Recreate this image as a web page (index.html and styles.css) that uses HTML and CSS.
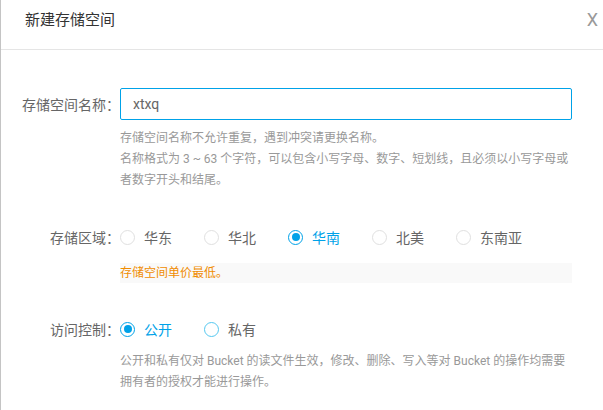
FILE: index.html
```html
<!DOCTYPE html>
<html lang="zh-CN">
<head>
    <meta charset="UTF-8">
    <meta name="viewport" content="width=device-width, initial-scale=1.0">
    <title>新建存储空间</title>
    <link rel="stylesheet" href="styles.css">
</head>
<body>
    <div class="dialog">
        <!-- Kopfzeile -->
        <div class="dialog-header">
            <span class="dialog-title">新建存储空间</span>
            <span class="dialog-close">X</span>
        </div>

        <div class="dialog-body">
            <!-- Name -->
            <div class="form-item">
                <label class="form-label" for="bucketName">存储空间名称：</label>
                <div class="form-control">
                    <input type="text" id="bucketName" class="text-input" value="xtxq" autofocus>
                </div>
            </div>
            <div class="form-help">
                <p>存储空间名称不允许重复，遇到冲突请更换名称。</p>
                <p>名称格式为 3 ~ 63 个字符，可以包含小写字母、数字、短划线，且必须以小写字母或者数字开头和结尾。</p>
            </div>

            <!-- Region -->
            <div class="form-item region-item">
                <span class="form-label">存储区域：</span>
                <div class="radio-group">
                    <span class="radio"><i class="radio-dot"></i>华东</span>
                    <span class="radio"><i class="radio-dot"></i>华北</span>
                    <span class="radio checked"><i class="radio-dot"></i>华南</span>
                    <span class="radio"><i class="radio-dot"></i>北美</span>
                    <span class="radio"><i class="radio-dot"></i>东南亚</span>
                </div>
            </div>
            <div class="form-note">存储空间单价最低。</div>

            <!-- Access -->
            <div class="form-item access-item">
                <span class="form-label">访问控制：</span>
                <div class="radio-group">
                    <span class="radio checked"><i class="radio-dot"></i>公开</span>
                    <span class="radio hover"><i class="radio-dot"></i>私有</span>
                </div>
            </div>
            <div class="form-help access-help">
                <p>公开和私有仅对 Bucket 的读文件生效，修改、删除、写入等对 Bucket 的操作均需要拥有者的授权才能进行操作。</p>
            </div>
        </div>
    </div>
</body>
</html>
```

FILE: styles.css
```css
/* Grundlayout */
body {
    margin: 0;
    font-family: Roboto, "Noto Sans CJK SC", sans-serif;
    color: #666;
    background: #fff;
}

.dialog {
    border-left: 1px solid #c4c4c4;
    height: 410px;
    box-sizing: border-box;
    overflow: hidden;
}

/* Kopfzeile */
.dialog-header {
    height: 50px;
    box-sizing: border-box;
    border-bottom: 1px solid #e5e5e5;
    display: flex;
    justify-content: space-between;
    align-items: flex-start;
    padding: 9px 5px 0 24px;
}
.dialog-title {
    font-size: 15px;
    line-height: 22px;
    color: #333;
}
.dialog-close {
    font-size: 18px;
    line-height: 22px;
    color: #999;
}

/* Formular */
.dialog-body {
    padding-top: 38px;
}
.form-item {
    display: flex;
    align-items: center;
    height: 32px;
}
.form-label {
    width: 119px;
    flex: none;
    text-align: right;
    font-family: Roboto, "Noto Sans CJK JP", sans-serif;
    font-size: 14px;
    color: #666;
    white-space: nowrap;
}
.form-control {
    flex: none;
}
.text-input {
    width: 452px;
    height: 32px;
    box-sizing: border-box;
    border: 1px solid #00a2e8;
    border-radius: 2px;
    padding: 0 12px;
    font-family: Roboto, "Noto Sans CJK SC", sans-serif;
    font-size: 14px;
    color: #666;
    outline: none;
    caret-color: #333;
}

/* Hilfetexte */
.form-help {
    margin: 8px 0 0 119px;
    width: 452px;
    font-size: 12px;
    line-height: 21px;
    color: #999;
}
.form-help p {
    margin: 0;
}
.access-help {
    margin-top: 6px;
}

.region-item {
    margin-top: 30px;
}
.form-note {
    margin: 10px 0 0 119px;
    width: 452px;
    height: 20px;
    line-height: 20px;
    background: #f9f9f9;
    color: #f08c00;
    font-size: 12px;
}
.access-item {
    margin-top: 30px;
}

/* Radio-Buttons */
.radio-group {
    display: flex;
    align-items: center;
}
.radio {
    display: flex;
    align-items: center;
    font-size: 14px;
    color: #666;
    margin-right: 32px;
    width: 52px;
    white-space: nowrap;
}
.radio-dot {
    width: 15px;
    height: 15px;
    box-sizing: border-box;
    border: 1px solid #e0e0e0;
    border-radius: 50%;
    margin-right: 9px;
    flex: none;
    display: flex;
    align-items: center;
    justify-content: center;
}
.radio.checked {
    color: #00a2e8;
}
.radio.checked .radio-dot {
    border-color: #00a2e8;
}
.radio.checked .radio-dot::after {
    content: "";
    width: 8px;
    height: 8px;
    border-radius: 50%;
    background: #00a2e8;
}
.radio.hover .radio-dot {
    border-color: #55c8f0;
}
```
